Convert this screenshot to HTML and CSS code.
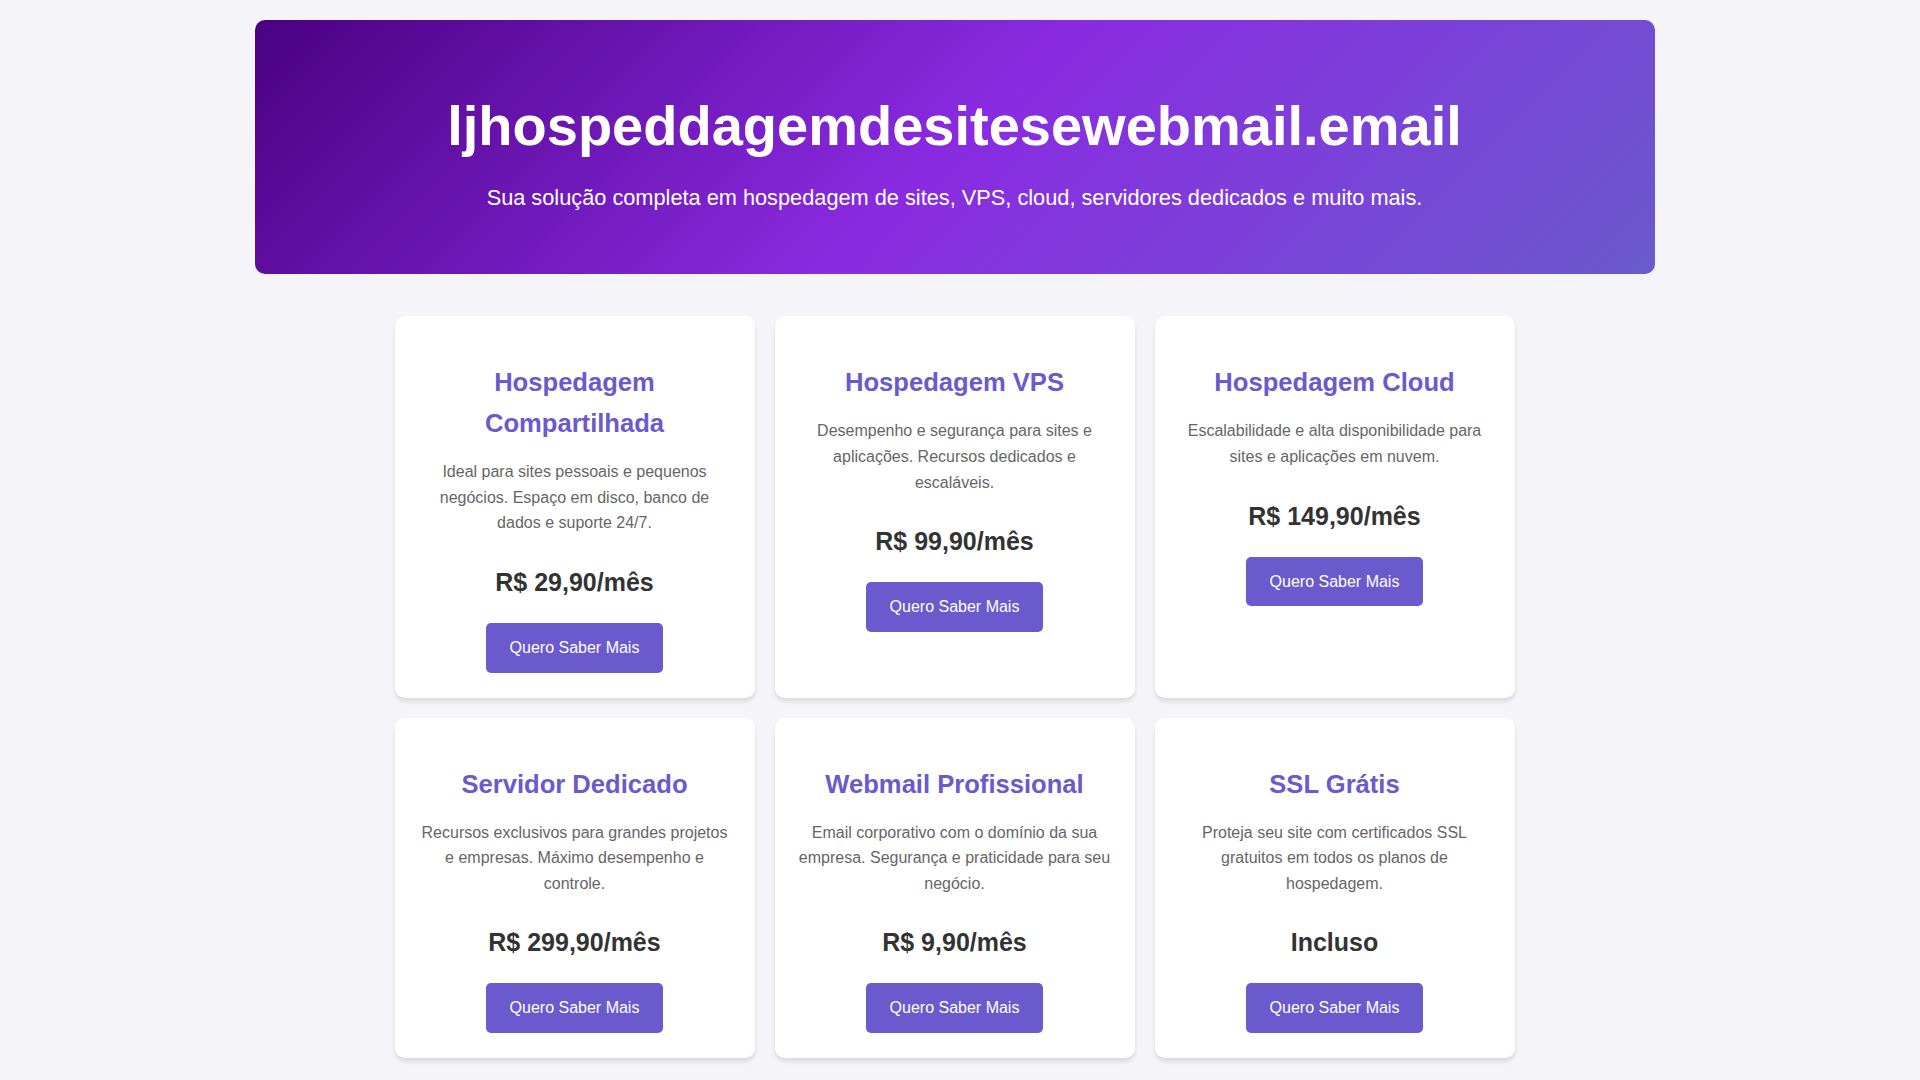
FILE: index.html
```html
<!DOCTYPE html>
<html lang="pt-BR">

<head>
    <meta charset="UTF-8">
    <meta name="viewport" content="width=device-width, initial-scale=1.0">
    <title>ljhospeddagemdesitesewebmail.email</title>
    <link rel="stylesheet" href="styles.css">
</head>

<body>

    <header class="hero">
        <h1>ljhospeddagemdesitesewebmail.email</h1>
        <p>Sua solução completa em hospedagem de sites, VPS, cloud, servidores dedicados e muito mais.</p>
    </header>

    <section class="services">
        <div class="service-card">
            <h3>Hospedagem Compartilhada</h3>
            <p>Ideal para sites pessoais e pequenos negócios. Espaço em disco, banco de dados e suporte 24/7.</p>
            <div class="price">R$ 29,90/mês</div>
            <a href="#" class="btn">Quero Saber Mais</a>
        </div>

        <div class="service-card">
            <h3>Hospedagem VPS</h3>
            <p>Desempenho e segurança para sites e aplicações. Recursos dedicados e escaláveis.</p>
            <div class="price">R$ 99,90/mês</div>
            <a href="#" class="btn">Quero Saber Mais</a>
        </div>

        <div class="service-card">
            <h3>Hospedagem Cloud</h3>
            <p>Escalabilidade e alta disponibilidade para sites e aplicações em nuvem.</p>
            <div class="price">R$ 149,90/mês</div>
            <a href="#" class="btn">Quero Saber Mais</a>
        </div>

        <div class="service-card">
            <h3>Servidor Dedicado</h3>
            <p>Recursos exclusivos para grandes projetos e empresas. Máximo desempenho e controle.</p>
            <div class="price">R$ 299,90/mês</div>
            <a href="#" class="btn">Quero Saber Mais</a>
        </div>

        <div class="service-card">
            <h3>Webmail Profissional</h3>
            <p>Email corporativo com o domínio da sua empresa. Segurança e praticidade para seu negócio.</p>
            <div class="price">R$ 9,90/mês</div>
            <a href="#" class="btn">Quero Saber Mais</a>
        </div>

        <div class="service-card">
            <h3>SSL Grátis</h3>
            <p>Proteja seu site com certificados SSL gratuitos em todos os planos de hospedagem.</p>
            <div class="price">Incluso</div>
            <a href="#" class="btn">Quero Saber Mais</a>
        </div>
    </section>

</body>

</html>
```

FILE: styles.css
```css
html {
    overflow-y: scroll;
}

::-webkit-scrollbar {
    width: 10px;
}

::-webkit-scrollbar-track {
    background: #fbfbfc;
}

::-webkit-scrollbar-thumb {
    background: #111;
    border: 2px solid #fbfbfc;
    border-radius: 5px;
}

body {
    font-family: "Liberation Sans", Arial, sans-serif;
    background-color: #f4f4f9;
    color: #333;
    line-height: 1.6;
    margin: 0;
    padding: 20px 11px 40px 0;
}

/* Banner */
.hero {
    max-width: 1400px;
    margin: 0 auto;
    padding: 61px 20px 59px;
    box-sizing: border-box;
    text-align: center;
    color: #fff;
    border-radius: 10px;
    background: linear-gradient(135deg, #4b0082, #8a2be2, #6a5acd);
}

.hero h1 {
    font-size: 3.5em;
    margin: 0 0 10px;
}

.hero p {
    font-size: 1.36em;
    margin: 0;
}

/* Service cards */
.services {
    display: grid;
    grid-template-columns: repeat(3, 360px);
    justify-content: center;
    gap: 20px;
    margin-top: 42px;
}

.service-card {
    background: #fff;
    border-radius: 10px;
    padding: 46px 24px 25px;
    text-align: center;
    box-shadow: 0 4px 4px rgba(0, 0, 0, 0.1);
}

.service-card h3 {
    font-size: 1.6em;
    color: #6a5acd;
    margin: 0 0 15px;
}

.service-card p {
    color: #666;
    margin: 0 0 26px;
}

.price {
    font-size: 25px;
    font-weight: bold;
    color: #333;
    margin-bottom: 21px;
}

.btn {
    display: inline-block;
    padding: 12px 24px;
    background: #6a5acd;
    color: #fff;
    text-decoration: none;
    border-radius: 5px;
}

.btn:hover {
    background: #5a4abd;
}
```
